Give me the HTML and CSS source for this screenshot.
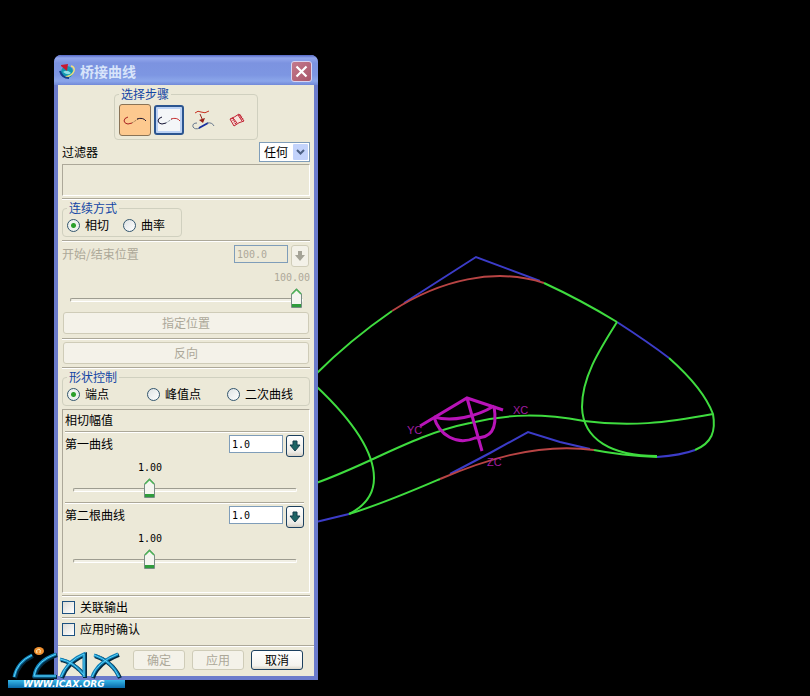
FILE: index.html
```html
<!DOCTYPE html>
<html lang="zh-CN">
<head>
  <meta charset="UTF-8">
  <meta name="viewport" content="width=device-width, initial-scale=1.0">
  <title>桥接曲线</title>
  <link rel="stylesheet" href="styles.css">
</head>
<body>
  <main class="desktop">
    <!-- Model view -->
    <svg class="viewport" viewBox="0 0 810 696" preserveAspectRatio="xMinYMin meet">
      <g class="curve blue">
        <path d="M404 303L476 257L540 281"/>
        <path d="M617 322C634 333 652 345 669 358"/>
        <path d="M695 450C682 455 671 456 657 457"/>
        <path d="M450 474L490 453L528 432L560 442L590 449"/>
        <path d="M316 522L349 514"/>
      </g>
      <g class="curve red">
        <path d="M392 311C440 280 495 267 544 283"/>
        <path d="M440 479C480 462 535 442 594 450"/>
      </g>
      <g class="curve green">
        <path d="M316 374C340 350 366 329 392 311"/>
        <path d="M544 283C570 295 594 308 617 322"/>
        <path d="M669 358C695 381 707 398 713 414C716 431 712 443 695 450"/>
        <path d="M617 322C598 352 582 378 582 407C583 440 612 456 657 456"/>
        <path d="M594 450C614 454 634 456 657 457"/>
        <path d="M316 483C370 464 415 434 470 423C510 413 545 414 584 421C630 427 665 423 713 414"/>
        <path d="M316 386C350 418 374 450 374 478C374 495 365 506 349 514"/>
        <path d="M349 514C382 504 412 491 440 479"/>
      </g>
      <g class="axes">
        <path d="M420 426L467 398L503 410M467 398L482 451"/>
        <path d="M434 417C452 422 476 417 494 406"/>
        <path d="M434 417C439 435 457 446 475 438C490 438 498 431 494 406"/>
      </g>
      <g class="axis-label">
        <text x="513" y="414">XC</text>
        <text x="407" y="434">YC</text>
        <text x="487" y="466">ZC</text>
      </g>
    </svg>

    <form class="dialog">
      <header class="titlebar">
        <svg class="app-icon" width="16" height="16" viewBox="0 0 16 16">
          <circle cx="8" cy="9" r="6" fill="#159ab0"/>
          <path d="M4 9Q8 6 12 10Q9 13 4 9" fill="#8ee0e8"/>
          <path d="M12 3Q16 4 15 8Q13 13 6 14" fill="none" stroke="#f0e27a" stroke-width="1.4"/>
          <path d="M1 8Q3 15 10 15" fill="none" stroke="#153f8c" stroke-width="2"/>
          <path d="M2 2L9 1L8 8L2 3Z" fill="#c81830"/>
        </svg>
        <h1>桥接曲线</h1>
        <button type="button" class="close" aria-label="关闭">
          <svg width="13" height="13" viewBox="0 0 13 13"><path d="M1.500 1.500L11.500 11.500M11.500 1.500L1.500 11.500" stroke="#fff" stroke-width="2.200"/></svg>
        </button>
      </header>

      <div class="content">
        <fieldset class="steps">
          <legend>选择步骤</legend>
          <div class="tools">
            <button type="button" class="tool active" aria-label="第一曲线">
              <svg width="24" height="16" viewBox="0 0 24 16"><path d="M5 5Q1 6 1 9Q2 12 5 12L9 11" stroke="#a82020"/><path d="M9 11L15 7" stroke="#806040" stroke-dasharray="1 1"/><path d="M14 7Q20 5 23 9" stroke="#201830"/></svg>
            </button>
            <button type="button" class="tool focused" aria-label="第二曲线">
              <svg width="24" height="16" viewBox="0 0 24 16"><path d="M5 5Q1 6 1 9Q2 12 5 12L9 11" stroke="#101030"/><path d="M9 11L15 7" stroke="#607080" stroke-dasharray="1 1"/><path d="M14 7Q20 5 23 9" stroke="#c83030"/></svg>
            </button>
            <button type="button" class="tool" aria-label="参考曲线">
              <svg width="24" height="22" viewBox="0 0 24 22"><path d="M4 4Q7 1 10 3Q14 5 18 2" stroke="#c83020"/><path d="M9 5L12 12" stroke="#982018"/><path d="M8 11L12 14L14 9Z" fill="#982018" stroke="none"/><path d="M6 14Q1 14 2 18Q4 21 9 19" stroke="#68788c"/><path d="M8 19L17 14" stroke="#1830a0" stroke-width="2"/><path d="M16 14Q21 13 23 17" stroke="#68788c"/></svg>
            </button>
            <button type="button" class="tool" aria-label="参考面">
              <svg width="18" height="18" viewBox="0 0 18 18"><path d="M2 8Q7 6 11 3L16 10Q11 11 6 15Z" fill="#f8e4dc" stroke="#c02030"/><path d="M5 7L9 12M10 4L14 10" stroke="#c02030"/><path d="M4 7L8 13M12 4L15 9" stroke="#c02030" stroke-width="2" stroke-dasharray="1 1"/></svg>
            </button>
          </div>
        </fieldset>

        <div class="row filter">
          <label for="filter">过滤器</label>
          <span class="select-box">
            <select id="filter"><option>任何</option></select>
            <svg class="chevron" width="15" height="16" viewBox="0 0 15 16"><rect width="15" height="16" rx="1" fill="#c3d3fb"/><path d="M4 6L7.500 9.500L11 6" fill="none" stroke="#4d6185" stroke-width="2"/></svg>
          </span>
        </div>
        <div class="sunken message"></div>
        <hr>

        <fieldset class="continuity">
          <legend>连续方式</legend>
          <div class="radios">
            <label><input type="radio" name="continuity" checked>相切</label>
            <label><input type="radio" name="continuity">曲率</label>
          </div>
        </fieldset>
        <hr>

        <div class="row entry disabled">
          <label for="position">开始/结束位置</label>
          <input type="text" id="position" value="100.0" disabled>
          <button type="button" class="drop" aria-label="选项" disabled>
            <svg width="12" height="12" viewBox="0 0 12 12"><path d="M4 1H8V5H11L6 11L1 5H4Z"/></svg>
          </button>
        </div>
        <output class="value end">100.00</output>
        <input type="range" class="slider wide" aria-label="开始/结束位置" min="0" max="100" value="100">
        <button type="button" class="btn full" disabled>指定位置</button>
        <hr>
        <button type="button" class="btn full second" disabled>反向</button>
        <hr>

        <fieldset class="shape">
          <legend>形状控制</legend>
          <div class="radios spread">
            <label><input type="radio" name="shape" checked>端点</label>
            <label><input type="radio" name="shape">峰值点</label>
            <label><input type="radio" name="shape">二次曲线</label>
          </div>
        </fieldset>

        <section class="sunken magnitude">
          <h2>相切幅值</h2>
          <hr>
          <div class="row entry">
            <label for="first">第一曲线</label>
            <input type="text" id="first" value="1.0">
            <button type="button" class="drop" aria-label="选项">
              <svg width="12" height="12" viewBox="0 0 12 12"><path d="M4 1H8V5H11L6 11L1 5H4Z"/></svg>
            </button>
          </div>
          <output class="value">1.00</output>
          <input type="range" class="slider" aria-label="第一曲线" min="0" max="3" step="0.01" value="1">
          <hr>
          <div class="row entry">
            <label for="second">第二根曲线</label>
            <input type="text" id="second" value="1.0">
            <button type="button" class="drop" aria-label="选项">
              <svg width="12" height="12" viewBox="0 0 12 12"><path d="M4 1H8V5H11L6 11L1 5H4Z"/></svg>
            </button>
          </div>
          <output class="value">1.00</output>
          <input type="range" class="slider" aria-label="第二根曲线" min="0" max="3" step="0.01" value="1">
        </section>
        <hr>

        <label class="check"><input type="checkbox">关联输出</label>
        <hr>
        <label class="check"><input type="checkbox">应用时确认</label>
      </div>

      <footer class="actions">
        <button type="button" class="btn" disabled>确定</button>
        <button type="button" class="btn" disabled>应用</button>
        <button type="button" class="btn default">取消</button>
      </footer>
    </form>

    <svg class="logo" width="120" height="44" viewBox="0 0 120 44">
      <defs>
        <linearGradient id="bar" x1="0" y1="0" x2="0" y2="1">
          <stop offset="0" stop-color="#38b8e8"/>
          <stop offset="1" stop-color="#0868a8"/>
        </linearGradient>
        <g id="strokes">
          <path d="M6 31Q9 16 24 9"/>
          <path d="M48 8Q28 15 26 30H48"/>
          <path d="M53 31Q59 15 76 8L76 31"/>
          <path d="M52 13Q66 16 76 29"/>
          <path d="M84 31Q89 16 110 8"/>
          <path d="M86 9Q104 15 111 31"/>
        </g>
      </defs>
      <use href="#strokes" class="mark shadow" x="1" y="1"/>
      <use href="#strokes" class="mark"/>
      <use href="#strokes" class="mark shine"/>
      <ellipse cx="31" cy="5" rx="5" ry="4" fill="#f09030"/>
      <path d="M29 7Q27 4 31 3Q33 3 32 7" fill="none" stroke="#fff0c0"/>
      <rect x="0" y="34" width="117" height="8" fill="url(#bar)"/>
      <text x="15" y="41">WWW.ICAX.ORG</text>
    </svg>
  </main>
</body>
</html>
```
FILE: styles.css
```css
:root {
  --face: #ece9d8;
  --line: #aca899;
  --frame: #6b7bcb;
  --heading: #1346a5;
  --muted: #aca899;
  --field: #7f9db9;
}

* {
  margin: 0;
  padding: 0;
  box-sizing: border-box;
}

body {
  background: #000;
  color: #000;
  font-family: "Noto Sans CJK SC", sans-serif;
  font-size: 12px;
  line-height: 12px;
}

button,
input,
select {
  font: inherit;
  color: inherit;
}

/* Model view */
.desktop {
  position: relative;
  min-height: 100vh;
  overflow: hidden;
}

.viewport {
  display: block;
  width: 100%;
  height: 100vh;
}

.curve {
  fill: none;
  stroke-width: 2;
}

.green {
  stroke: #3fdc3f;
}

.red {
  stroke: #b84444;
}

.blue {
  stroke: #3c3cc8;
}

.axes {
  fill: none;
  stroke: #b814b8;
  stroke-width: 3;
}

.axis-label {
  fill: #a01ca0;
  font-family: "Liberation Sans", sans-serif;
  font-size: 11px;
}

/* Dialog window */
.dialog {
  position: absolute;
  left: 54px;
  top: 55px;
  width: 264px;
  background: var(--face);
  border: 4px solid var(--frame);
  border-top: 0;
  border-radius: 7px 7px 0 0;
}

.titlebar {
  display: flex;
  align-items: center;
  gap: 5px;
  height: 30px;
  margin: 0 -4px;
  padding: 2px 6px 0 5px;
  border-radius: 7px 7px 0 0;
  background: linear-gradient(#5366c4 0, #93a7ec 3px, #7c93e0 8px, #7d96e2 20px, #8ba6ea 26px, #7189d8 30px);
}

.titlebar h1 {
  flex: 1;
  color: #d8e4fa;
  font-size: 14px;
  line-height: 20px;
}

.close {
  display: flex;
  align-items: center;
  justify-content: center;
  width: 21px;
  height: 21px;
  border: 1px solid #d8d4f0;
  border-radius: 3px;
  background: linear-gradient(135deg, #c4798c, #a9566a);
}

.content {
  display: flex;
  flex-direction: column;
  padding: 3px 4px 0;
}

hr {
  height: 2px;
  margin: 2px 0;
  border: 0;
  border-top: 1px solid var(--line);
  border-bottom: 1px solid #fff;
}

fieldset {
  min-width: 0;
  padding: 3px 0;
  border: 1px solid #d0d0bf;
  border-radius: 4px;
}

legend {
  margin-left: 4px;
  padding: 0 2px;
  color: var(--heading);
  line-height: 12px;
}

.steps {
  align-self: center;
  width: 144px;
  padding: 4px 4px 3px;
}

.steps legend {
  margin-left: 0;
}

.tools {
  display: flex;
  align-items: center;
  gap: 2px;
}

.tool {
  display: flex;
  align-items: center;
  justify-content: center;
  width: 32px;
  height: 32px;
  border: 1px solid transparent;
  border-radius: 3px;
  background: none;
}

.tool svg {
  flex: none;
  fill: none;
}

.tool.active {
  border-color: #8a7356;
  background: #fdc98f;
}

.tool.focused {
  width: 30px;
  height: 30px;
  margin: 0 1px;
  border: 2px solid #2b5590;
  background: #f4f6f8;
  box-shadow: inset 0 0 0 2px #bcd2f4;
}

.row {
  display: flex;
}

.filter {
  align-items: center;
  justify-content: space-between;
  height: 20px;
  margin: 2px 0;
}

.select-box {
  position: relative;
}

.select-box select {
  display: block;
  width: 51px;
  height: 20px;
  padding: 0 4px;
  appearance: none;
  border: 1px solid var(--field);
  border-radius: 0;
  background: #fff;
  line-height: 18px;
}

.chevron {
  position: absolute;
  top: 2px;
  right: 2px;
  pointer-events: none;
}

.sunken {
  border: 1px solid;
  border-color: var(--line) #fff #fff var(--line);
}

.message {
  height: 32px;
}

.continuity {
  width: 120px;
  margin-bottom: 1px;
}

.radios {
  display: flex;
  gap: 14px;
  height: 16px;
  padding-left: 4px;
}

.radios label {
  display: flex;
  align-items: center;
  gap: 5px;
}

.radios.spread label {
  flex: 0 0 66px;
  white-space: nowrap;
}

input[type="radio"] {
  width: 13px;
  height: 13px;
  appearance: none;
  border: 1px solid #33566f;
  border-radius: 50%;
  background: linear-gradient(135deg, #dfe3e4, #fff);
}

input[type="radio"]:checked {
  background: radial-gradient(circle, #2ba02b 0 2px, #eef2ee 3px);
}

.entry {
  align-items: flex-start;
  gap: 3px;
  height: 22px;
  margin-top: 2px;
}

.entry.disabled {
  margin-top: 1px;
  padding-right: 1px;
}

.entry label {
  flex: 1;
  line-height: 18px;
}

.entry input {
  width: 54px;
  height: 18px;
  padding: 0 2px;
  border: 1px solid var(--field);
  background: #fff;
  font-family: "DejaVu Sans Mono", monospace;
  font-size: 10px;
}

.entry input:disabled {
  background: var(--face);
}

.disabled,
.btn:disabled {
  color: var(--muted);
}

.drop {
  display: flex;
  align-items: center;
  justify-content: center;
  width: 18px;
  height: 22px;
  border: 1px solid #1c405f;
  border-radius: 3px;
  background: linear-gradient(#fff, #ecebe6 80%, #d6d0c5);
}

.drop svg {
  flex: none;
  fill: #1d6464;
  stroke: #123c4c;
}

.drop:disabled {
  border-color: #d0cdb9;
  background: #f3f1e8;
}

.drop:disabled svg {
  fill: #a5a397;
  stroke: none;
}

.value {
  display: block;
  width: 170px;
  margin: 5px 0 6px;
  font-family: "DejaVu Sans Mono", monospace;
  font-size: 10px;
  text-align: center;
}

.value.end {
  width: auto;
  color: var(--muted);
  text-align: right;
}

/* Sliders */
.slider {
  display: block;
  width: 224px;
  height: 20px;
  margin: 0 8px 2px;
  appearance: none;
  background: none;
}

.slider.wide {
  width: 233px;
}

.slider::-webkit-slider-runnable-track {
  height: 4px;
  border: 1px solid;
  border-color: #9d9c90 #fff #fff #9d9c90;
  border-radius: 2px;
  background: #f1efe4;
}

.slider::-webkit-slider-thumb {
  width: 11px;
  height: 20px;
  margin-top: -11px;
  appearance: none;
  background: url("data:image/svg+xml,%3Csvg xmlns='http://www.w3.org/2000/svg' width='11' height='20'%3E%3Cpath d='M.5 19.500V6L5.500 .7 10.500 6V19.500Z' fill='%23f5f5f0' stroke='%23788c84'/%3E%3Cpath d='M1 6L5.500 1.500 10 6' fill='none' stroke='%234cb456' stroke-width='1.500'/%3E%3Cpath d='M1 16H10V19H1Z' fill='%232f9c3c'/%3E%3C/svg%3E");
}

.btn {
  width: 52px;
  height: 20px;
  border: 1px solid #1c405f;
  border-radius: 3px;
  background: linear-gradient(#fff, #f4f3ee 80%, #dcd7cb);
}

.btn:disabled {
  border-color: #cfccb8;
  background: #f4f2e9;
}

.btn.full {
  width: auto;
  height: 22px;
  margin: 0 1px 2px;
}

.btn.second {
  margin-bottom: 1px;
}

.shape {
  margin: 0 0 3px;
}

.magnitude {
  height: 184px;
  padding: 1px 5px 0 2px;
}

.magnitude h2 {
  font-size: 12px;
  font-weight: normal;
  line-height: 18px;
}

.check {
  display: flex;
  align-items: center;
  gap: 5px;
  height: 16px;
}

.check input {
  width: 13px;
  height: 13px;
  appearance: none;
  border: 1px solid #1c5180;
  background: linear-gradient(135deg, #dcdcd7, #fff);
}

.actions {
  display: flex;
  justify-content: flex-end;
  gap: 7px;
  margin-top: 8px;
  padding: 4px 11px 6px 0;
  border-top: 1px solid var(--line);
  box-shadow: inset 0 1px #fff;
}

/* Corner logo */
.logo {
  position: absolute;
  left: 8px;
  top: 646px;
}

.mark {
  fill: none;
  stroke: #1080b8;
  stroke-width: 3;
}

.mark.shadow {
  stroke: #04293f;
  stroke-width: 4;
}

.mark.shine {
  stroke: #5cd4f8;
  stroke-width: 1;
}

.logo text {
  fill: #fff;
  font-family: "DejaVu Sans", sans-serif;
  font-size: 9px;
  font-style: italic;
  font-weight: bold;
}
```
